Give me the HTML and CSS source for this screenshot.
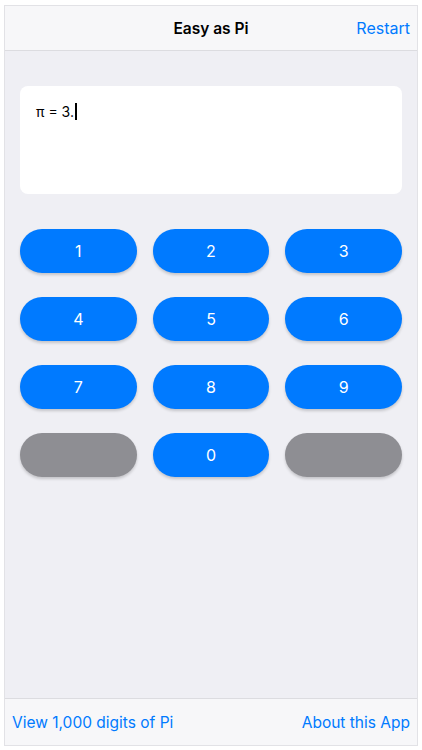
FILE: index.html
```html
<!DOCTYPE html>
<html>
<head>
    <title>Easy as Pi</title>
    <meta charset="utf-8">
    <meta name="viewport" content="width=device-width, initial-scale=1">
    <link rel="stylesheet" href="styles.css">
</head>
<body>
    <div class="app">
        <div class="navbar">
            <span class="nav-title">Easy as Pi</span>
            <span class="nav-link">Restart</span>
        </div>

        <div class="content">
            <div class="display">
                <span class="digits">π = 3.</span><span class="cursor"></span>
            </div>

            <div class="keypad">
                <button class="key">1</button>
                <button class="key">2</button>
                <button class="key">3</button>
                <button class="key">4</button>
                <button class="key">5</button>
                <button class="key">6</button>
                <button class="key">7</button>
                <button class="key">8</button>
                <button class="key">9</button>
                <button class="key blank"></button>
                <button class="key">0</button>
                <button class="key blank"></button>
            </div>
        </div>

        <div class="footer">
            <span class="footer-link">View 1,000 digits of Pi</span>
            <span class="footer-link">About this App</span>
        </div>
    </div>
</body>
</html>
```

FILE: styles.css
```css
html, body {
    margin: 0;
    height: 100%;
    background-color: #ffffff;
}

body {
    font-family: Inter, "Liberation Sans", sans-serif;
    padding: 5px 4px 4px 4px;
    box-sizing: border-box;
}

.app {
    height: 100%;
    box-sizing: border-box;
    border: 1px solid #e2e2e6;
    display: flex;
    flex-direction: column;
    background-color: #efeff4;
}

.navbar {
    height: 44px;
    flex-shrink: 0;
    display: flex;
    align-items: center;
    justify-content: center;
    position: relative;
    background-color: #f7f7f9;
    border-bottom: 1px solid #dcdce0;
}

.nav-title {
    font-size: 15.5px;
    font-weight: 600;
    color: #000;
}

.nav-link {
    position: absolute;
    right: 7px;
    font-size: 16px;
    color: #007aff;
}

.content {
    flex: 1;
    padding: 35px 15px 0 15px;
}

.display {
    height: 108px;
    background-color: #ffffff;
    border-radius: 8px;
    padding: 17px 16px;
    box-sizing: border-box;
    display: flex;
    align-items: flex-start;
}

.digits {
    font-size: 14px;
    color: #000;
    line-height: 18px;
}

.cursor {
    display: inline-block;
    width: 2px;
    height: 17px;
    margin-left: 1px;
    background-color: #000;
}

.keypad {
    margin-top: 35px;
    display: grid;
    grid-template-columns: repeat(3, 1fr);
    column-gap: 16px;
    row-gap: 24px;
}

.key {
    height: 44px;
    border: none;
    border-radius: 22px;
    background-color: #007aff;
    color: #ffffff;
    font-family: inherit;
    font-size: 16px;
    box-shadow: 0 2px 3px rgba(0,0,0,0.18);
    padding: 0;
}

.key.blank {
    background-color: #8e8e93;
}

.footer {
    height: 46px;
    flex-shrink: 0;
    display: flex;
    align-items: center;
    justify-content: space-between;
    padding: 0 7px;
    background-color: #f7f7f9;
    border-top: 1px solid #dcdce0;
}

.footer-link {
    font-size: 15.5px;
    color: #007aff;
}
```
